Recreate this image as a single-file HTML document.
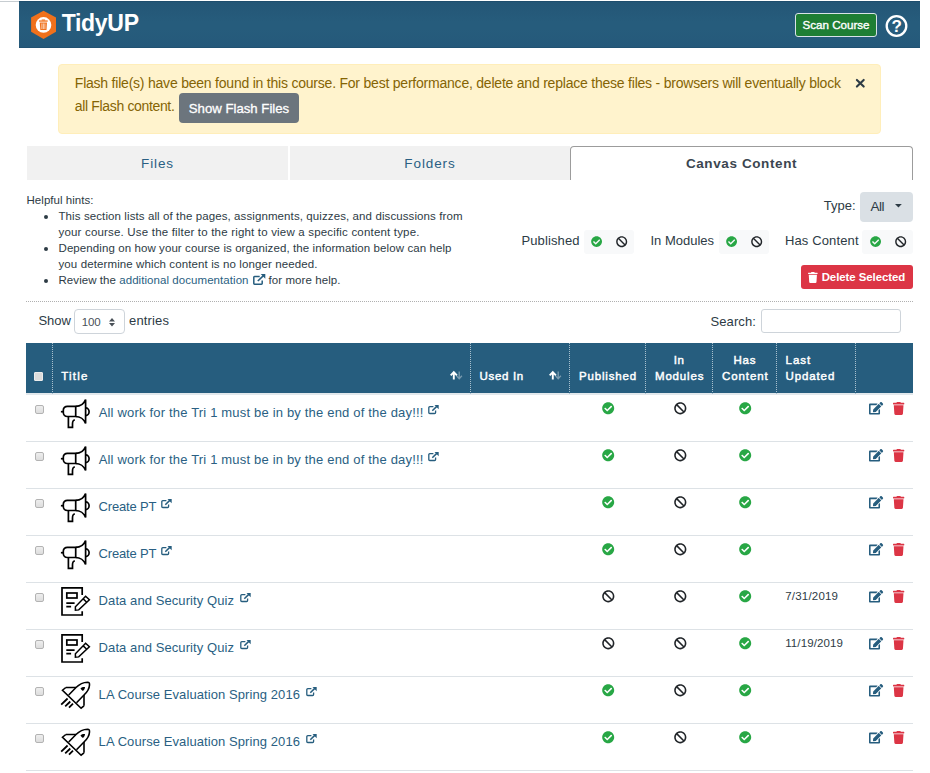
<!DOCTYPE html>
<html>
<head>
<meta charset="utf-8">
<title>TidyUP</title>
<style>
*{box-sizing:border-box;margin:0;padding:0}
html,body{width:930px;height:773px;overflow:hidden;background:#fff}
body{font-family:"Liberation Sans",sans-serif;color:#2d3b45;position:relative;font-size:14px}
.abs{position:absolute}
.t{position:absolute;white-space:nowrap;line-height:1}
#topline{left:0;top:1px;width:19px;height:1px;background:#c7cdd1}
#hdr{left:19px;top:1px;width:901px;height:47px;background:linear-gradient(#245676 0%,#265c7c 45%,#265c7c 60%,#25597a 100%);border-top:1px solid #1e4d6d;border-bottom:1px solid #215272}
#brand{left:61.7px;top:11.7px;font-size:23px;font-weight:bold;color:#fff;letter-spacing:-.3px}
#scan{left:795px;top:13px;width:82px;height:24px;background:#1e7e34;border:1px solid #d9e2e8;border-radius:3px;color:#fff;font-size:11.6px;-webkit-text-stroke:.35px #fff;text-align:center;line-height:21px;white-space:nowrap}
#alert{left:58px;top:64px;width:823px;height:70px;background:#fff3cd;border:1px solid #ffeeba;border-radius:4px}
.at{color:#856404;font-size:14px}
#flashbtn{left:179px;top:93px;width:120px;height:30px;background:#6c757d;border-radius:4px;color:#fff;font-size:13.2px;-webkit-text-stroke:.3px #fff;text-align:center;line-height:31px;white-space:nowrap}
.tab{top:146px;height:34px;background:#f1f1f1;color:#2a5f83;font-size:13.5px;text-align:center;line-height:36px;letter-spacing:.9px}
#tab3{left:570px;top:146px;width:343px;height:34px;background:#fff;border:1px solid #9c9c9c;border-bottom:none;border-radius:4px 4px 0 0;color:#3b4650;font-weight:bold;font-size:13.5px;text-align:center;line-height:34px;letter-spacing:.6px}
.hint{font-size:11.5px;color:#2d3b45}
.bul{left:44px;width:4px;height:4px;border-radius:50%;background:#2d3b45}
.lbl,.lnk{font-size:13px!important}
.lbl{font-size:13.5px;color:#2d3b45}
.tog{top:230px;height:24px;background:#f8f9fa;border-radius:3px}
#typebtn{left:860px;top:192px;width:53px;height:30px;background:#dae0e5;border-radius:4px;font-size:13.5px;color:#2d3b45;line-height:30px;padding-left:10px}
#delbtn{left:801px;top:265px;width:112px;height:24px;background:#dc3545;border-radius:3px;color:#fff;font-size:12px;font-weight:bold;line-height:24px;white-space:nowrap}
.dot{left:26px;width:887px;height:0;border-top:1px dotted #b0b0b0}
#sel{left:74px;top:309px;width:51px;height:25px;border:1px solid #ced4da;border-radius:4px;background:#fff}
#search{left:761px;top:309px;width:140px;height:24px;border:1px solid #ced4da;border-radius:3px;background:#fff}
#thead{left:26px;top:343px;width:887px;height:50px;background:#265d7e}
.th{color:#fff;font-size:11.5px;font-weight:normal;-webkit-text-stroke:.45px #fff;letter-spacing:.7px}
.vs{top:343px;width:0;height:51px;border-left:1px dotted #a9c0ce}
.row{left:26px;width:887px;height:1px;background:#dde2e6}
.cb{left:35px;width:9px;height:9px;border:1px solid #b3b3b3;border-radius:2px;background:linear-gradient(#eeeeee,#dddddd)}
.lnk{color:#2a5f83;font-size:13.5px}
.date{font-size:11.5px;color:#2d3b45}
svg{position:absolute;overflow:visible}
</style>
<style id="fit">
#al1{left:74.8px!important;letter-spacing:-0.218px!important}
#al2{left:74.8px!important;letter-spacing:-0.344px!important}
#h0{left:26.5px!important;letter-spacing:0.040px!important}
#h1{left:58.5px!important;letter-spacing:0.099px!important}
#h2{left:58.5px!important;letter-spacing:0.184px!important}
#h3{left:58.5px!important;letter-spacing:0.086px!important}
#h4{left:58.5px!important;letter-spacing:0.110px!important}
#h5{left:58.5px!important;letter-spacing:0.060px!important}
#h6{left:268.5px!important;letter-spacing:0.081px!important}
#typel{left:823.8px!important;letter-spacing:0.001px!important}
#publ{left:521.5px!important;letter-spacing:0.111px!important}
#inml{left:650.5px!important;letter-spacing:-0.010px!important}
#hasl{left:785.0px!important;letter-spacing:0.123px!important}
#showl{left:38.4px!important;letter-spacing:-0.044px!important}
#entl{left:129.0px!important;letter-spacing:0.161px!important}
#srchl{left:710.6px!important;letter-spacing:0.065px!important}
#thTitle{left:61.3px!important;letter-spacing:1.172px!important}
#thUsed{left:479.5px!important;letter-spacing:0.677px!important}
#thPub{left:578.9px!important;letter-spacing:0.848px!important}
#thIn{left:673.8px!important;letter-spacing:0.606px!important}
#thMod{left:655.0px!important;letter-spacing:0.822px!important}
#thHas{left:733.4px!important;letter-spacing:0.823px!important}
#thCon{left:722.0px!important;letter-spacing:0.903px!important}
#thLast{left:785.5px!important;letter-spacing:0.983px!important}
#thUpd{left:785.5px!important;letter-spacing:0.886px!important}
#r0{left:98.7px!important;letter-spacing:0.182px!important}
#r1{left:98.7px!important;letter-spacing:0.182px!important}
#r2{left:98.6px!important;letter-spacing:-0.169px!important}
#r3{left:98.6px!important;letter-spacing:-0.169px!important}
#r4{left:98.6px!important;letter-spacing:0.082px!important}
#r5{left:98.6px!important;letter-spacing:0.082px!important}
#r6{left:98.6px!important;letter-spacing:0.085px!important}
#r7{left:98.6px!important;letter-spacing:0.085px!important}
#delt{left:821.7px!important;letter-spacing:-0.051px!important}
#allt{left:870.4px!important;letter-spacing:-0.408px!important}
#sel100{left:81.7px!important;letter-spacing:-0.094px!important}
#d4{left:785.2px!important;letter-spacing:0.204px!important}
#d5{left:785.2px!important;letter-spacing:0.122px!important}
</style>
</head>
<body>
<div class="abs" id="topline"></div>
<div class="abs" id="hdr"></div>
<svg id="logo" style="left:31px;top:10px" width="26" height="30" viewBox="0 0 26 30">
<polygon points="12.500,0.800 25,7.600 25,21.800 12.500,29 0.100,21.800 0.100,7.600" fill="#f0711c"/>
<circle cx="12.500" cy="14.900" r="7.800" fill="#fff"/>
<g fill="#f0711c"><rect x="8.100" y="10.400" width="8.600" height="1.300"/><rect x="10.700" y="9.500" width="3.400" height="1.100"/><path d="M8.800 12.500h7.200l-0.500 7.500h-6.200z"/></g>
<g stroke="#fff" stroke-width=".75" stroke-opacity=".85"><line x1="10.900" y1="13.500" x2="10.900" y2="19"/><line x1="12.400" y1="13.500" x2="12.400" y2="19"/><line x1="13.900" y1="13.500" x2="13.900" y2="19"/></g>
</svg>
<div class="t" id="brand">TidyUP</div>
<div class="abs" id="scan">Scan Course</div>
<svg id="help" style="left:885px;top:15px" width="23" height="23" viewBox="0 0 23 23">
<circle cx="11.5" cy="11" r="9.8" fill="none" stroke="#fff" stroke-width="2.3"/>
<text x="11.6" y="17.2" font-family="Liberation Sans" font-weight="bold" font-size="17" fill="#fff" text-anchor="middle">?</text>
</svg>

<div class="abs" id="alert"></div>
<div class="t at" id="al1" style="left:74px;top:76.3px">Flash file(s) have been found in this course. For best performance, delete and replace these files - browsers will eventually block</div>
<div class="t at" id="al2" style="left:74px;top:98.7px">all Flash content.</div>
<div class="abs" id="flashbtn">Show Flash Files</div>
<svg style="left:855px;top:78px" width="11" height="11" viewBox="0 0 11 11"><path d="M1.900 1.900L8.700 8.600M8.700 1.900L1.900 8.600" stroke="#2d3b45" stroke-width="2.100" stroke-linecap="round" fill="none"/></svg>

<div class="abs tab" id="tab1" style="left:27px;width:261px">Files</div>
<div class="abs tab" id="tab2" style="left:290px;width:280px">Folders</div>
<div class="abs" id="tab3">Canvas Content</div>

<div class="t hint" id="h0" style="left:26px;top:195px">Helpful hints:</div>
<div class="t hint" id="h1" style="left:58px;top:211px">This section lists all of the pages, assignments, quizzes, and discussions from</div>
<div class="t hint" id="h2" style="left:58px;top:227px">your course. Use the filter to the right to view a specific content type.</div>
<div class="t hint" id="h3" style="left:58px;top:243px">Depending on how your course is organized, the information below can help</div>
<div class="t hint" id="h4" style="left:58px;top:259px">you determine which content is no longer needed.</div>
<div class="t hint" id="h5" style="left:58px;top:275px">Review the <span style="color:#2a5f83">additional documentation</span></div>
<div class="t hint" id="h6" style="left:269px;top:275px">for more help.</div>

<div class="abs bul" style="top:215px"></div>
<div class="abs bul" style="top:247px"></div>
<div class="abs bul" style="top:279px"></div>
<svg style="left:253px;top:274.300px" width="12.500" height="11" viewBox="0 0 12.500 11"><g fill="none" stroke="#265d7e"><path d="M6.700 2.500H1.500A0.700 0.700 0 0 0 0.800 3.200V9.500A0.700 0.700 0 0 0 1.500 10.200H8.500A0.700 0.700 0 0 0 9.200 9.500V6.400" stroke-width="1.500"/><path d="M4.800 7L10.500 1.600" stroke-width="1.600"/></g><path d="M7.700 0.100H12.300V4.700z" fill="#265d7e"/></svg>
<div class="t lbl" id="typel" style="left:823px;top:199px">Type:</div>
<div class="abs" id="typebtn"></div><div class="t" id="allt" style="left:870.4px;top:200.3px;font-size:13.5px;color:#2d3b45">All</div><svg style="left:895.3px;top:204.2px" width="6.8" height="3.6" viewBox="0 0 68 36"><path d="M0 0H68L34 36z" fill="#2d3b45"/></svg>
<div class="t lbl" id="publ" style="left:522px;top:234px">Published</div>
<div class="t lbl" id="inml" style="left:650px;top:234px">In Modules</div>
<div class="t lbl" id="hasl" style="left:785px;top:234px">Has Content</div>
<div class="abs tog" style="left:584px;width:50px"></div>
<div class="abs tog" style="left:719px;width:50px"></div>
<div class="abs tog" style="left:862px;width:51px"></div>
<svg style="left:591px;top:236.4px;fill:#28a745" width="11.2" height="11.2" viewBox="0 0 512 512"><path d="M504 256c0 136.967-111.033 248-248 248S8 392.967 8 256 119.033 8 256 8s248 111.033 248 248zM227.314 387.314l184-184c6.248-6.248 6.248-16.379 0-22.627l-22.627-22.627c-6.248-6.249-16.379-6.249-22.628 0L216 308.118l-70.059-70.059c-6.248-6.248-16.379-6.248-22.628 0l-22.627 22.627c-6.248 6.248-6.248 16.379 0 22.627l104 104c6.249 6.249 16.379 6.249 22.628.001z"/></svg><svg style="left:615.6px;top:236.3px;fill:#212529" width="11.4" height="11.4" viewBox="0 0 512 512"><path d="M256 8C119.034 8 8 119.033 8 256s111.034 248 248 248 248-111.034 248-248S392.967 8 256 8zm130.108 117.892c65.448 65.448 70 165.481 20.677 235.637L150.47 105.216c70.204-49.356 170.226-44.735 235.638 20.676zM125.892 386.108c-65.448-65.448-70-165.481-20.677-235.637L361.53 406.784c-70.203 49.356-170.226 44.736-235.638-20.676z"/></svg>
<svg style="left:726px;top:236.4px;fill:#28a745" width="11.2" height="11.2" viewBox="0 0 512 512"><path d="M504 256c0 136.967-111.033 248-248 248S8 392.967 8 256 119.033 8 256 8s248 111.033 248 248zM227.314 387.314l184-184c6.248-6.248 6.248-16.379 0-22.627l-22.627-22.627c-6.248-6.249-16.379-6.249-22.628 0L216 308.118l-70.059-70.059c-6.248-6.248-16.379-6.248-22.628 0l-22.627 22.627c-6.248 6.248-6.248 16.379 0 22.627l104 104c6.249 6.249 16.379 6.249 22.628.001z"/></svg><svg style="left:750.6px;top:236.3px;fill:#212529" width="11.4" height="11.4" viewBox="0 0 512 512"><path d="M256 8C119.034 8 8 119.033 8 256s111.034 248 248 248 248-111.034 248-248S392.967 8 256 8zm130.108 117.892c65.448 65.448 70 165.481 20.677 235.637L150.47 105.216c70.204-49.356 170.226-44.735 235.638 20.676zM125.892 386.108c-65.448-65.448-70-165.481-20.677-235.637L361.53 406.784c-70.203 49.356-170.226 44.736-235.638-20.676z"/></svg>
<svg style="left:870px;top:236.4px;fill:#28a745" width="11.2" height="11.2" viewBox="0 0 512 512"><path d="M504 256c0 136.967-111.033 248-248 248S8 392.967 8 256 119.033 8 256 8s248 111.033 248 248zM227.314 387.314l184-184c6.248-6.248 6.248-16.379 0-22.627l-22.627-22.627c-6.248-6.249-16.379-6.249-22.628 0L216 308.118l-70.059-70.059c-6.248-6.248-16.379-6.248-22.628 0l-22.627 22.627c-6.248 6.248-6.248 16.379 0 22.627l104 104c6.249 6.249 16.379 6.249 22.628.001z"/></svg><svg style="left:894.6px;top:236.3px;fill:#212529" width="11.4" height="11.4" viewBox="0 0 512 512"><path d="M256 8C119.034 8 8 119.033 8 256s111.034 248 248 248 248-111.034 248-248S392.967 8 256 8zm130.108 117.892c65.448 65.448 70 165.481 20.677 235.637L150.47 105.216c70.204-49.356 170.226-44.735 235.638 20.676zM125.892 386.108c-65.448-65.448-70-165.481-20.677-235.637L361.53 406.784c-70.203 49.356-170.226 44.736-235.638-20.676z"/></svg>
<div class="abs" id="delbtn"></div><svg style="left:808.1px;top:271.5px;fill:#fff" width="9.7" height="10.9" viewBox="0 0 448 512"><path d="M432 32H312l-9.400-18.700A24 24 0 0 0 281.100 0H166.800a23.720 23.720 0 0 0-21.400 13.300L136 32H16A16 16 0 0 0 0 48v32a16 16 0 0 0 16 16h416a16 16 0 0 0 16-16V48a16 16 0 0 0-16-16zM53.200 467a48 48 0 0 0 47.900 45h245.800a48 48 0 0 0 47.900-45L416 128H32z"/></svg><div class="t" id="delt" style="left:821.7px;top:271.5px;font-size:11.4px;font-weight:bold;color:#fff">Delete Selected</div>

<div class="abs dot" style="top:301px"></div>
<div class="t lbl" id="showl" style="left:38px;top:314px">Show</div>
<div class="abs" id="sel"></div>
<div class="t" id="sel100" style="left:82px;top:316.5px;font-size:11.5px;color:#495057">100</div>
<svg style="left:108.6px;top:317.5px" width="6" height="8.4" viewBox="0 0 60 84"><path d="M0 34L30 0L60 34zM0 50L30 84L60 50z" fill="#495057"/></svg>
<div class="t lbl" id="entl" style="left:129px;top:314px">entries</div>
<div class="t lbl" id="srchl" style="left:711px;top:315px">Search:</div>
<div class="abs" id="search"></div>

<div class="abs" id="thead"></div><div class="abs" style="left:26px;top:393px;width:887px;height:2px;background:#e2e8ec"></div>
<!--TABLE-->
<div class="abs cb" style="top:372px;left:34px;background:#dcdcdc;border-color:#ececec;border-radius:1px"></div>
<div class="abs vs" style="left:52px"></div>
<div class="abs vs" style="left:470px"></div>
<div class="abs vs" style="left:569px"></div>
<div class="abs vs" style="left:645px"></div>
<div class="abs vs" style="left:712px"></div>
<div class="abs vs" style="left:776px"></div>
<div class="abs vs" style="left:855px"></div>
<div class="t th" id="thTitle" style="left:61px;top:371px">Title</div>
<div class="t th" id="thUsed" style="left:479px;top:371px">Used In</div>
<div class="t th" id="thPub" style="left:579px;top:371px">Published</div>
<div class="t th" id="thIn" style="left:673px;top:355px">In</div>
<div class="t th" id="thMod" style="left:655px;top:371px">Modules</div>
<div class="t th" id="thHas" style="left:733px;top:355px">Has</div>
<div class="t th" id="thCon" style="left:722px;top:371px">Content</div>
<div class="t th" id="thLast" style="left:786px;top:355px">Last</div>
<div class="t th" id="thUpd" style="left:786px;top:371px">Updated</div>
<svg style="left:450px;top:370.5px" width="13" height="9" viewBox="0 0 13 9"><g fill="none" stroke="#fff" stroke-width="1.9"><path d="M3.800 1.500V8.400M0.700 4.400L3.800 1.200L6.900 4.400"/></g><g fill="none" stroke="#fff" stroke-opacity=".38" stroke-width="1.300"><path d="M9.200 0.400V7.600M6.500 4.800L9.200 7.800L11.900 4.800"/></g></svg>
<svg style="left:549.4px;top:370.5px" width="13" height="9" viewBox="0 0 13 9"><g fill="none" stroke="#fff" stroke-width="1.9"><path d="M3.800 1.500V8.400M0.700 4.400L3.800 1.200L6.900 4.400"/></g><g fill="none" stroke="#fff" stroke-opacity=".38" stroke-width="1.300"><path d="M9.200 0.400V7.600M6.500 4.800L9.200 7.800L11.900 4.800"/></g></svg>
<div class="abs cb" style="top:405px"></div>
<svg style="left:60px;top:398px" width="31" height="31" viewBox="0 0 31 31"><g fill="none" stroke="#000" stroke-width="1.7" stroke-linejoin="miter"><path d="M0.900 13.700H3.300"/><path d="M15.700 8.300H7.300a4 4 0 0 0-4 4v2.200a4 4 0 0 0 4 4H15.700z"/><path d="M15.700 8.300C20 8.300 24 5.500 25.600 1.600V25.500C24 21.500 20 18.500 15.700 18.500"/><path d="M25.600 9.900a3.500 3.900 0 0 1 0 7.800"/><path d="M8.400 18.500V29.300H12.500V26C12.500 23.500 13.500 22 14.900 22"/></g></svg>
<div class="t lnk" id="r0" style="left:98px;top:406px">All work for the Tri 1 must be in by the end of the day!!!</div>
<svg style="left:428.2px;top:404.8px;fill:#265d7e;stroke:#265d7e" width="11" height="9.2" viewBox="0 0 11 9.2"><path d="M5.400 1.700H1.800A1 1 0 0 0 0.800 2.700V7.500A1 1 0 0 0 1.800 8.500H6.600A1 1 0 0 0 7.600 7.500V5.400" fill="none" stroke-width="1.300"/><path d="M4.300 5.700L8.800 1.400" fill="none" stroke-width="1.500"/><path d="M6.500 0.100H10.700V4.300z" stroke="none"/></svg>
<svg style="left:602px;top:402px;fill:#28a745" width="12.4" height="12.4" viewBox="0 0 512 512"><path d="M504 256c0 136.967-111.033 248-248 248S8 392.967 8 256 119.033 8 256 8s248 111.033 248 248zM227.314 387.314l184-184c6.248-6.248 6.248-16.379 0-22.627l-22.627-22.627c-6.248-6.249-16.379-6.249-22.628 0L216 308.118l-70.059-70.059c-6.248-6.248-16.379-6.248-22.628 0l-22.627 22.627c-6.248 6.248-6.248 16.379 0 22.627l104 104c6.249 6.249 16.379 6.249 22.628.001z"/></svg>
<svg style="left:673.7px;top:402px;fill:#212529" width="12.6" height="12.6" viewBox="0 0 512 512"><path d="M256 8C119.034 8 8 119.033 8 256s111.034 248 248 248 248-111.034 248-248S392.967 8 256 8zm130.108 117.892c65.448 65.448 70 165.481 20.677 235.637L150.47 105.216c70.204-49.356 170.226-44.735 235.638 20.676zM125.892 386.108c-65.448-65.448-70-165.481-20.677-235.637L361.53 406.784c-70.203 49.356-170.226 44.736-235.638-20.676z"/></svg>
<svg style="left:739px;top:402px;fill:#28a745" width="12.4" height="12.4" viewBox="0 0 512 512"><path d="M504 256c0 136.967-111.033 248-248 248S8 392.967 8 256 119.033 8 256 8s248 111.033 248 248zM227.314 387.314l184-184c6.248-6.248 6.248-16.379 0-22.627l-22.627-22.627c-6.248-6.249-16.379-6.249-22.628 0L216 308.118l-70.059-70.059c-6.248-6.248-16.379-6.248-22.628 0l-22.627 22.627c-6.248 6.248-6.248 16.379 0 22.627l104 104c6.249 6.249 16.379 6.249 22.628.001z"/></svg>
<svg style="left:869px;top:401.5px;fill:#265d7e" width="14.2" height="12.6" viewBox="0 0 576 512"><path d="M402.600 83.200l90.200 90.200c3.800 3.800 3.800 10 0 13.800L274.400 405.600l-92.800 10.300c-12.400 1.400-22.900-9.100-21.500-21.500l10.300-92.800L388.800 83.200c3.800-3.800 10-3.800 13.800 0zm162-22.900l-48.800-48.800c-15.200-15.200-39.900-15.200-55.200 0l-35.400 35.400c-3.800 3.800-3.800 10 0 13.800l90.200 90.200c3.800 3.800 10 3.800 13.800 0l35.400-35.400c15.200-15.300 15.200-40 0-55.200zM384 346.200V448H64V128h229.800c3.200 0 6.200-1.300 8.500-3.500l40-40c7.600-7.600 2.200-20.500-8.500-20.500H48C21.500 64 0 85.500 0 112v352c0 26.500 21.500 48 48 48h352c26.500 0 48-21.500 48-48V306.200c0-10.700-12.900-16-20.500-8.500l-40 40c-2.200 2.300-3.500 5.300-3.500 8.500z"/></svg>
<svg style="left:893px;top:401.5px;fill:#dc3545" width="11.3" height="12.9" viewBox="0 0 448 512"><path d="M432 32H312l-9.400-18.700A24 24 0 0 0 281.100 0H166.800a23.720 23.720 0 0 0-21.400 13.300L136 32H16A16 16 0 0 0 0 48v32a16 16 0 0 0 16 16h416a16 16 0 0 0 16-16V48a16 16 0 0 0-16-16zM53.200 467a48 48 0 0 0 47.900 45h245.800a48 48 0 0 0 47.900-45L416 128H32z"/></svg>
<div class="abs row" style="top:441px"></div>
<div class="abs cb" style="top:452px"></div>
<svg style="left:60px;top:445px" width="31" height="31" viewBox="0 0 31 31"><g fill="none" stroke="#000" stroke-width="1.7" stroke-linejoin="miter"><path d="M0.900 13.700H3.300"/><path d="M15.700 8.300H7.300a4 4 0 0 0-4 4v2.200a4 4 0 0 0 4 4H15.700z"/><path d="M15.700 8.300C20 8.300 24 5.500 25.600 1.600V25.500C24 21.500 20 18.500 15.700 18.500"/><path d="M25.600 9.900a3.500 3.900 0 0 1 0 7.800"/><path d="M8.400 18.500V29.300H12.500V26C12.500 23.500 13.500 22 14.900 22"/></g></svg>
<div class="t lnk" id="r1" style="left:98px;top:453px">All work for the Tri 1 must be in by the end of the day!!!</div>
<svg style="left:428.2px;top:451.8px;fill:#265d7e;stroke:#265d7e" width="11" height="9.2" viewBox="0 0 11 9.2"><path d="M5.400 1.700H1.800A1 1 0 0 0 0.800 2.700V7.500A1 1 0 0 0 1.800 8.500H6.600A1 1 0 0 0 7.600 7.500V5.400" fill="none" stroke-width="1.300"/><path d="M4.300 5.700L8.800 1.400" fill="none" stroke-width="1.500"/><path d="M6.500 0.100H10.700V4.300z" stroke="none"/></svg>
<svg style="left:602px;top:449px;fill:#28a745" width="12.4" height="12.4" viewBox="0 0 512 512"><path d="M504 256c0 136.967-111.033 248-248 248S8 392.967 8 256 119.033 8 256 8s248 111.033 248 248zM227.314 387.314l184-184c6.248-6.248 6.248-16.379 0-22.627l-22.627-22.627c-6.248-6.249-16.379-6.249-22.628 0L216 308.118l-70.059-70.059c-6.248-6.248-16.379-6.248-22.628 0l-22.627 22.627c-6.248 6.248-6.248 16.379 0 22.627l104 104c6.249 6.249 16.379 6.249 22.628.001z"/></svg>
<svg style="left:673.7px;top:449px;fill:#212529" width="12.6" height="12.6" viewBox="0 0 512 512"><path d="M256 8C119.034 8 8 119.033 8 256s111.034 248 248 248 248-111.034 248-248S392.967 8 256 8zm130.108 117.892c65.448 65.448 70 165.481 20.677 235.637L150.47 105.216c70.204-49.356 170.226-44.735 235.638 20.676zM125.892 386.108c-65.448-65.448-70-165.481-20.677-235.637L361.53 406.784c-70.203 49.356-170.226 44.736-235.638-20.676z"/></svg>
<svg style="left:739px;top:449px;fill:#28a745" width="12.4" height="12.4" viewBox="0 0 512 512"><path d="M504 256c0 136.967-111.033 248-248 248S8 392.967 8 256 119.033 8 256 8s248 111.033 248 248zM227.314 387.314l184-184c6.248-6.248 6.248-16.379 0-22.627l-22.627-22.627c-6.248-6.249-16.379-6.249-22.628 0L216 308.118l-70.059-70.059c-6.248-6.248-16.379-6.248-22.628 0l-22.627 22.627c-6.248 6.248-6.248 16.379 0 22.627l104 104c6.249 6.249 16.379 6.249 22.628.001z"/></svg>
<svg style="left:869px;top:448.5px;fill:#265d7e" width="14.2" height="12.6" viewBox="0 0 576 512"><path d="M402.600 83.200l90.200 90.200c3.800 3.800 3.800 10 0 13.800L274.400 405.600l-92.800 10.300c-12.400 1.400-22.900-9.100-21.500-21.500l10.300-92.800L388.800 83.200c3.800-3.800 10-3.800 13.800 0zm162-22.900l-48.800-48.800c-15.200-15.200-39.900-15.200-55.200 0l-35.400 35.400c-3.800 3.800-3.800 10 0 13.800l90.200 90.200c3.800 3.800 10 3.800 13.800 0l35.400-35.400c15.200-15.300 15.200-40 0-55.200zM384 346.200V448H64V128h229.800c3.200 0 6.200-1.300 8.500-3.500l40-40c7.600-7.600 2.200-20.500-8.500-20.500H48C21.500 64 0 85.500 0 112v352c0 26.500 21.500 48 48 48h352c26.500 0 48-21.500 48-48V306.200c0-10.700-12.900-16-20.500-8.500l-40 40c-2.200 2.300-3.500 5.300-3.500 8.500z"/></svg>
<svg style="left:893px;top:448.5px;fill:#dc3545" width="11.3" height="12.9" viewBox="0 0 448 512"><path d="M432 32H312l-9.400-18.700A24 24 0 0 0 281.100 0H166.800a23.720 23.720 0 0 0-21.400 13.300L136 32H16A16 16 0 0 0 0 48v32a16 16 0 0 0 16 16h416a16 16 0 0 0 16-16V48a16 16 0 0 0-16-16zM53.200 467a48 48 0 0 0 47.900 45h245.800a48 48 0 0 0 47.900-45L416 128H32z"/></svg>
<div class="abs row" style="top:488px"></div>
<div class="abs cb" style="top:499px"></div>
<svg style="left:60px;top:492px" width="31" height="31" viewBox="0 0 31 31"><g fill="none" stroke="#000" stroke-width="1.7" stroke-linejoin="miter"><path d="M0.900 13.700H3.300"/><path d="M15.700 8.300H7.300a4 4 0 0 0-4 4v2.200a4 4 0 0 0 4 4H15.700z"/><path d="M15.700 8.300C20 8.300 24 5.500 25.600 1.600V25.500C24 21.500 20 18.500 15.700 18.500"/><path d="M25.600 9.900a3.500 3.900 0 0 1 0 7.800"/><path d="M8.400 18.500V29.300H12.500V26C12.500 23.500 13.500 22 14.900 22"/></g></svg>
<div class="t lnk" id="r2" style="left:98px;top:500px">Create PT</div>
<svg style="left:161.3px;top:498.8px;fill:#265d7e;stroke:#265d7e" width="11" height="9.2" viewBox="0 0 11 9.2"><path d="M5.400 1.700H1.800A1 1 0 0 0 0.800 2.700V7.500A1 1 0 0 0 1.800 8.500H6.600A1 1 0 0 0 7.600 7.500V5.400" fill="none" stroke-width="1.300"/><path d="M4.300 5.700L8.800 1.400" fill="none" stroke-width="1.500"/><path d="M6.500 0.100H10.700V4.300z" stroke="none"/></svg>
<svg style="left:602px;top:496px;fill:#28a745" width="12.4" height="12.4" viewBox="0 0 512 512"><path d="M504 256c0 136.967-111.033 248-248 248S8 392.967 8 256 119.033 8 256 8s248 111.033 248 248zM227.314 387.314l184-184c6.248-6.248 6.248-16.379 0-22.627l-22.627-22.627c-6.248-6.249-16.379-6.249-22.628 0L216 308.118l-70.059-70.059c-6.248-6.248-16.379-6.248-22.628 0l-22.627 22.627c-6.248 6.248-6.248 16.379 0 22.627l104 104c6.249 6.249 16.379 6.249 22.628.001z"/></svg>
<svg style="left:673.7px;top:496px;fill:#212529" width="12.6" height="12.6" viewBox="0 0 512 512"><path d="M256 8C119.034 8 8 119.033 8 256s111.034 248 248 248 248-111.034 248-248S392.967 8 256 8zm130.108 117.892c65.448 65.448 70 165.481 20.677 235.637L150.47 105.216c70.204-49.356 170.226-44.735 235.638 20.676zM125.892 386.108c-65.448-65.448-70-165.481-20.677-235.637L361.53 406.784c-70.203 49.356-170.226 44.736-235.638-20.676z"/></svg>
<svg style="left:739px;top:496px;fill:#28a745" width="12.4" height="12.4" viewBox="0 0 512 512"><path d="M504 256c0 136.967-111.033 248-248 248S8 392.967 8 256 119.033 8 256 8s248 111.033 248 248zM227.314 387.314l184-184c6.248-6.248 6.248-16.379 0-22.627l-22.627-22.627c-6.248-6.249-16.379-6.249-22.628 0L216 308.118l-70.059-70.059c-6.248-6.248-16.379-6.248-22.628 0l-22.627 22.627c-6.248 6.248-6.248 16.379 0 22.627l104 104c6.249 6.249 16.379 6.249 22.628.001z"/></svg>
<svg style="left:869px;top:495.5px;fill:#265d7e" width="14.2" height="12.6" viewBox="0 0 576 512"><path d="M402.600 83.200l90.200 90.200c3.800 3.800 3.800 10 0 13.800L274.400 405.600l-92.800 10.300c-12.400 1.400-22.900-9.100-21.500-21.500l10.300-92.800L388.800 83.200c3.800-3.800 10-3.800 13.800 0zm162-22.900l-48.800-48.800c-15.200-15.200-39.900-15.200-55.200 0l-35.400 35.400c-3.800 3.800-3.800 10 0 13.800l90.200 90.200c3.800 3.800 10 3.800 13.800 0l35.400-35.400c15.200-15.300 15.200-40 0-55.200zM384 346.200V448H64V128h229.800c3.200 0 6.200-1.300 8.500-3.500l40-40c7.600-7.600 2.200-20.500-8.500-20.500H48C21.500 64 0 85.500 0 112v352c0 26.500 21.500 48 48 48h352c26.500 0 48-21.500 48-48V306.200c0-10.700-12.900-16-20.500-8.500l-40 40c-2.200 2.300-3.500 5.300-3.500 8.500z"/></svg>
<svg style="left:893px;top:495.5px;fill:#dc3545" width="11.3" height="12.9" viewBox="0 0 448 512"><path d="M432 32H312l-9.400-18.700A24 24 0 0 0 281.100 0H166.800a23.720 23.720 0 0 0-21.400 13.300L136 32H16A16 16 0 0 0 0 48v32a16 16 0 0 0 16 16h416a16 16 0 0 0 16-16V48a16 16 0 0 0-16-16zM53.200 467a48 48 0 0 0 47.900 45h245.800a48 48 0 0 0 47.900-45L416 128H32z"/></svg>
<div class="abs row" style="top:535px"></div>
<div class="abs cb" style="top:546px"></div>
<svg style="left:60px;top:539px" width="31" height="31" viewBox="0 0 31 31"><g fill="none" stroke="#000" stroke-width="1.7" stroke-linejoin="miter"><path d="M0.900 13.700H3.300"/><path d="M15.700 8.300H7.300a4 4 0 0 0-4 4v2.200a4 4 0 0 0 4 4H15.700z"/><path d="M15.700 8.300C20 8.300 24 5.500 25.600 1.600V25.500C24 21.500 20 18.500 15.700 18.500"/><path d="M25.600 9.900a3.500 3.900 0 0 1 0 7.800"/><path d="M8.400 18.500V29.300H12.500V26C12.500 23.500 13.500 22 14.900 22"/></g></svg>
<div class="t lnk" id="r3" style="left:98px;top:547px">Create PT</div>
<svg style="left:161.3px;top:545.8px;fill:#265d7e;stroke:#265d7e" width="11" height="9.2" viewBox="0 0 11 9.2"><path d="M5.400 1.700H1.800A1 1 0 0 0 0.800 2.700V7.500A1 1 0 0 0 1.800 8.500H6.600A1 1 0 0 0 7.600 7.500V5.400" fill="none" stroke-width="1.300"/><path d="M4.300 5.700L8.800 1.400" fill="none" stroke-width="1.500"/><path d="M6.500 0.100H10.700V4.300z" stroke="none"/></svg>
<svg style="left:602px;top:543px;fill:#28a745" width="12.4" height="12.4" viewBox="0 0 512 512"><path d="M504 256c0 136.967-111.033 248-248 248S8 392.967 8 256 119.033 8 256 8s248 111.033 248 248zM227.314 387.314l184-184c6.248-6.248 6.248-16.379 0-22.627l-22.627-22.627c-6.248-6.249-16.379-6.249-22.628 0L216 308.118l-70.059-70.059c-6.248-6.248-16.379-6.248-22.628 0l-22.627 22.627c-6.248 6.248-6.248 16.379 0 22.627l104 104c6.249 6.249 16.379 6.249 22.628.001z"/></svg>
<svg style="left:673.7px;top:543px;fill:#212529" width="12.6" height="12.6" viewBox="0 0 512 512"><path d="M256 8C119.034 8 8 119.033 8 256s111.034 248 248 248 248-111.034 248-248S392.967 8 256 8zm130.108 117.892c65.448 65.448 70 165.481 20.677 235.637L150.47 105.216c70.204-49.356 170.226-44.735 235.638 20.676zM125.892 386.108c-65.448-65.448-70-165.481-20.677-235.637L361.53 406.784c-70.203 49.356-170.226 44.736-235.638-20.676z"/></svg>
<svg style="left:739px;top:543px;fill:#28a745" width="12.4" height="12.4" viewBox="0 0 512 512"><path d="M504 256c0 136.967-111.033 248-248 248S8 392.967 8 256 119.033 8 256 8s248 111.033 248 248zM227.314 387.314l184-184c6.248-6.248 6.248-16.379 0-22.627l-22.627-22.627c-6.248-6.249-16.379-6.249-22.628 0L216 308.118l-70.059-70.059c-6.248-6.248-16.379-6.248-22.628 0l-22.627 22.627c-6.248 6.248-6.248 16.379 0 22.627l104 104c6.249 6.249 16.379 6.249 22.628.001z"/></svg>
<svg style="left:869px;top:542.5px;fill:#265d7e" width="14.2" height="12.6" viewBox="0 0 576 512"><path d="M402.600 83.200l90.200 90.200c3.800 3.800 3.800 10 0 13.800L274.400 405.600l-92.800 10.300c-12.400 1.400-22.900-9.100-21.500-21.500l10.300-92.800L388.800 83.200c3.800-3.800 10-3.800 13.800 0zm162-22.900l-48.800-48.800c-15.200-15.200-39.900-15.200-55.200 0l-35.400 35.400c-3.800 3.800-3.800 10 0 13.800l90.200 90.200c3.800 3.800 10 3.800 13.800 0l35.400-35.400c15.200-15.300 15.200-40 0-55.200zM384 346.200V448H64V128h229.800c3.200 0 6.200-1.300 8.500-3.500l40-40c7.600-7.600 2.200-20.500-8.500-20.500H48C21.500 64 0 85.500 0 112v352c0 26.500 21.500 48 48 48h352c26.500 0 48-21.500 48-48V306.200c0-10.700-12.900-16-20.500-8.500l-40 40c-2.200 2.300-3.500 5.300-3.500 8.500z"/></svg>
<svg style="left:893px;top:542.5px;fill:#dc3545" width="11.3" height="12.9" viewBox="0 0 448 512"><path d="M432 32H312l-9.400-18.700A24 24 0 0 0 281.100 0H166.800a23.720 23.720 0 0 0-21.400 13.300L136 32H16A16 16 0 0 0 0 48v32a16 16 0 0 0 16 16h416a16 16 0 0 0 16-16V48a16 16 0 0 0-16-16zM53.200 467a48 48 0 0 0 47.900 45h245.800a48 48 0 0 0 47.900-45L416 128H32z"/></svg>
<div class="abs row" style="top:582px"></div>
<div class="abs cb" style="top:593px"></div>
<svg style="left:60px;top:586px" width="31" height="31" viewBox="0 0 31 31"><g fill="none" stroke="#000" stroke-width="1.7"><path d="M22.200 9.100V1.800H2V29H22.200V25.200"/><rect x="6.800" y="7" width="10.200" height="5"/><path d="M6.300 17.200H14.600M6.300 20.700H11.100"/><path d="M25.600 10.200L29.400 13.700L18.700 23.900L15.400 24.200L15.400 20.700ZM23.200 12.900L26.200 15.800" stroke-width="1.5"/></g></svg>
<div class="t lnk" id="r4" style="left:98px;top:594px">Data and Security Quiz</div>
<svg style="left:239.5px;top:592.8px;fill:#265d7e;stroke:#265d7e" width="11" height="9.2" viewBox="0 0 11 9.2"><path d="M5.400 1.700H1.800A1 1 0 0 0 0.800 2.700V7.500A1 1 0 0 0 1.800 8.500H6.600A1 1 0 0 0 7.600 7.500V5.400" fill="none" stroke-width="1.300"/><path d="M4.300 5.700L8.800 1.400" fill="none" stroke-width="1.500"/><path d="M6.500 0.100H10.700V4.300z" stroke="none"/></svg>
<svg style="left:601.5px;top:590px;fill:#212529" width="12.6" height="12.6" viewBox="0 0 512 512"><path d="M256 8C119.034 8 8 119.033 8 256s111.034 248 248 248 248-111.034 248-248S392.967 8 256 8zm130.108 117.892c65.448 65.448 70 165.481 20.677 235.637L150.47 105.216c70.204-49.356 170.226-44.735 235.638 20.676zM125.892 386.108c-65.448-65.448-70-165.481-20.677-235.637L361.53 406.784c-70.203 49.356-170.226 44.736-235.638-20.676z"/></svg>
<svg style="left:673.7px;top:590px;fill:#212529" width="12.6" height="12.6" viewBox="0 0 512 512"><path d="M256 8C119.034 8 8 119.033 8 256s111.034 248 248 248 248-111.034 248-248S392.967 8 256 8zm130.108 117.892c65.448 65.448 70 165.481 20.677 235.637L150.47 105.216c70.204-49.356 170.226-44.735 235.638 20.676zM125.892 386.108c-65.448-65.448-70-165.481-20.677-235.637L361.53 406.784c-70.203 49.356-170.226 44.736-235.638-20.676z"/></svg>
<svg style="left:739px;top:590px;fill:#28a745" width="12.4" height="12.4" viewBox="0 0 512 512"><path d="M504 256c0 136.967-111.033 248-248 248S8 392.967 8 256 119.033 8 256 8s248 111.033 248 248zM227.314 387.314l184-184c6.248-6.248 6.248-16.379 0-22.627l-22.627-22.627c-6.248-6.249-16.379-6.249-22.628 0L216 308.118l-70.059-70.059c-6.248-6.248-16.379-6.248-22.628 0l-22.627 22.627c-6.248 6.248-6.248 16.379 0 22.627l104 104c6.249 6.249 16.379 6.249 22.628.001z"/></svg>
<div class="t date" id="d4" style="left:786px;top:591px">7/31/2019</div>
<svg style="left:869px;top:589.5px;fill:#265d7e" width="14.2" height="12.6" viewBox="0 0 576 512"><path d="M402.600 83.200l90.200 90.200c3.800 3.800 3.800 10 0 13.800L274.400 405.600l-92.800 10.300c-12.400 1.400-22.900-9.100-21.500-21.500l10.300-92.800L388.800 83.200c3.800-3.800 10-3.800 13.800 0zm162-22.900l-48.800-48.800c-15.200-15.200-39.900-15.200-55.200 0l-35.400 35.400c-3.800 3.800-3.800 10 0 13.800l90.200 90.200c3.800 3.800 10 3.800 13.800 0l35.400-35.400c15.200-15.300 15.200-40 0-55.200zM384 346.200V448H64V128h229.800c3.200 0 6.200-1.300 8.500-3.500l40-40c7.600-7.600 2.200-20.500-8.500-20.500H48C21.500 64 0 85.500 0 112v352c0 26.500 21.500 48 48 48h352c26.500 0 48-21.500 48-48V306.200c0-10.700-12.900-16-20.500-8.500l-40 40c-2.200 2.300-3.500 5.300-3.500 8.500z"/></svg>
<svg style="left:893px;top:589.5px;fill:#dc3545" width="11.3" height="12.9" viewBox="0 0 448 512"><path d="M432 32H312l-9.400-18.700A24 24 0 0 0 281.100 0H166.800a23.720 23.720 0 0 0-21.400 13.300L136 32H16A16 16 0 0 0 0 48v32a16 16 0 0 0 16 16h416a16 16 0 0 0 16-16V48a16 16 0 0 0-16-16zM53.200 467a48 48 0 0 0 47.900 45h245.800a48 48 0 0 0 47.900-45L416 128H32z"/></svg>
<div class="abs row" style="top:629px"></div>
<div class="abs cb" style="top:640px"></div>
<svg style="left:60px;top:633px" width="31" height="31" viewBox="0 0 31 31"><g fill="none" stroke="#000" stroke-width="1.7"><path d="M22.200 9.100V1.800H2V29H22.200V25.200"/><rect x="6.800" y="7" width="10.200" height="5"/><path d="M6.300 17.200H14.600M6.300 20.700H11.100"/><path d="M25.600 10.200L29.400 13.700L18.700 23.900L15.400 24.200L15.400 20.700ZM23.200 12.900L26.200 15.800" stroke-width="1.5"/></g></svg>
<div class="t lnk" id="r5" style="left:98px;top:641px">Data and Security Quiz</div>
<svg style="left:239.5px;top:639.8px;fill:#265d7e;stroke:#265d7e" width="11" height="9.2" viewBox="0 0 11 9.2"><path d="M5.400 1.700H1.800A1 1 0 0 0 0.800 2.700V7.500A1 1 0 0 0 1.800 8.500H6.600A1 1 0 0 0 7.600 7.500V5.400" fill="none" stroke-width="1.300"/><path d="M4.300 5.700L8.800 1.400" fill="none" stroke-width="1.500"/><path d="M6.500 0.100H10.700V4.300z" stroke="none"/></svg>
<svg style="left:601.5px;top:637px;fill:#212529" width="12.6" height="12.6" viewBox="0 0 512 512"><path d="M256 8C119.034 8 8 119.033 8 256s111.034 248 248 248 248-111.034 248-248S392.967 8 256 8zm130.108 117.892c65.448 65.448 70 165.481 20.677 235.637L150.47 105.216c70.204-49.356 170.226-44.735 235.638 20.676zM125.892 386.108c-65.448-65.448-70-165.481-20.677-235.637L361.53 406.784c-70.203 49.356-170.226 44.736-235.638-20.676z"/></svg>
<svg style="left:673.7px;top:637px;fill:#212529" width="12.6" height="12.6" viewBox="0 0 512 512"><path d="M256 8C119.034 8 8 119.033 8 256s111.034 248 248 248 248-111.034 248-248S392.967 8 256 8zm130.108 117.892c65.448 65.448 70 165.481 20.677 235.637L150.47 105.216c70.204-49.356 170.226-44.735 235.638 20.676zM125.892 386.108c-65.448-65.448-70-165.481-20.677-235.637L361.53 406.784c-70.203 49.356-170.226 44.736-235.638-20.676z"/></svg>
<svg style="left:739px;top:637px;fill:#28a745" width="12.4" height="12.4" viewBox="0 0 512 512"><path d="M504 256c0 136.967-111.033 248-248 248S8 392.967 8 256 119.033 8 256 8s248 111.033 248 248zM227.314 387.314l184-184c6.248-6.248 6.248-16.379 0-22.627l-22.627-22.627c-6.248-6.249-16.379-6.249-22.628 0L216 308.118l-70.059-70.059c-6.248-6.248-16.379-6.248-22.628 0l-22.627 22.627c-6.248 6.248-6.248 16.379 0 22.627l104 104c6.249 6.249 16.379 6.249 22.628.001z"/></svg>
<div class="t date" id="d5" style="left:786px;top:638px">11/19/2019</div>
<svg style="left:869px;top:636.5px;fill:#265d7e" width="14.2" height="12.6" viewBox="0 0 576 512"><path d="M402.600 83.200l90.200 90.200c3.800 3.800 3.800 10 0 13.800L274.400 405.600l-92.800 10.300c-12.400 1.400-22.900-9.100-21.500-21.500l10.300-92.800L388.800 83.200c3.800-3.800 10-3.800 13.800 0zm162-22.900l-48.800-48.800c-15.200-15.200-39.900-15.200-55.200 0l-35.400 35.400c-3.800 3.800-3.800 10 0 13.800l90.200 90.200c3.800 3.800 10 3.800 13.800 0l35.400-35.400c15.200-15.300 15.200-40 0-55.200zM384 346.200V448H64V128h229.800c3.200 0 6.200-1.300 8.500-3.500l40-40c7.600-7.600 2.200-20.500-8.500-20.500H48C21.500 64 0 85.500 0 112v352c0 26.500 21.500 48 48 48h352c26.500 0 48-21.500 48-48V306.200c0-10.700-12.900-16-20.500-8.500l-40 40c-2.200 2.300-3.500 5.300-3.500 8.500z"/></svg>
<svg style="left:893px;top:636.5px;fill:#dc3545" width="11.3" height="12.9" viewBox="0 0 448 512"><path d="M432 32H312l-9.400-18.700A24 24 0 0 0 281.100 0H166.800a23.720 23.720 0 0 0-21.400 13.300L136 32H16A16 16 0 0 0 0 48v32a16 16 0 0 0 16 16h416a16 16 0 0 0 16-16V48a16 16 0 0 0-16-16zM53.200 467a48 48 0 0 0 47.900 45h245.800a48 48 0 0 0 47.900-45L416 128H32z"/></svg>
<div class="abs row" style="top:676px"></div>
<div class="abs cb" style="top:687px"></div>
<svg style="left:60px;top:680px" width="31" height="31" viewBox="0 0 31 31"><g fill="none" stroke="#000" stroke-width="1.6"><path d="M8.700 15L16 7.500C19 4.500 23.500 2.300 27.500 2.200C29.200 2.200 29.600 3 29.500 5C29.300 9 27 12.300 24 15L16.500 22.800"/><path d="M5.800 7.500H16M24 15V25.800"/><path d="M5.800 7.500L2.500 10.200L21.100 28.200L24 25.800"/><path d="M1.200 24.700L7.600 18.500M5.200 26.300L10.300 21.500M9 27.600L13 23.600" stroke-width="1.800"/></g><path d="M20.500 8.200C22 6.800 24.500 6.800 25 7.200C25.300 7.800 24 10.200 23.200 10.800C22.500 11 21 9.500 20.500 8.200z" fill="#000"/></svg>
<div class="t lnk" id="r6" style="left:98px;top:688px">LA Course Evaluation Spring 2016</div>
<svg style="left:305.5px;top:686.8px;fill:#265d7e;stroke:#265d7e" width="11" height="9.2" viewBox="0 0 11 9.2"><path d="M5.400 1.700H1.800A1 1 0 0 0 0.800 2.700V7.500A1 1 0 0 0 1.800 8.500H6.600A1 1 0 0 0 7.600 7.500V5.400" fill="none" stroke-width="1.300"/><path d="M4.300 5.700L8.800 1.400" fill="none" stroke-width="1.500"/><path d="M6.500 0.100H10.700V4.300z" stroke="none"/></svg>
<svg style="left:602px;top:684px;fill:#28a745" width="12.4" height="12.4" viewBox="0 0 512 512"><path d="M504 256c0 136.967-111.033 248-248 248S8 392.967 8 256 119.033 8 256 8s248 111.033 248 248zM227.314 387.314l184-184c6.248-6.248 6.248-16.379 0-22.627l-22.627-22.627c-6.248-6.249-16.379-6.249-22.628 0L216 308.118l-70.059-70.059c-6.248-6.248-16.379-6.248-22.628 0l-22.627 22.627c-6.248 6.248-6.248 16.379 0 22.627l104 104c6.249 6.249 16.379 6.249 22.628.001z"/></svg>
<svg style="left:673.7px;top:684px;fill:#212529" width="12.6" height="12.6" viewBox="0 0 512 512"><path d="M256 8C119.034 8 8 119.033 8 256s111.034 248 248 248 248-111.034 248-248S392.967 8 256 8zm130.108 117.892c65.448 65.448 70 165.481 20.677 235.637L150.47 105.216c70.204-49.356 170.226-44.735 235.638 20.676zM125.892 386.108c-65.448-65.448-70-165.481-20.677-235.637L361.53 406.784c-70.203 49.356-170.226 44.736-235.638-20.676z"/></svg>
<svg style="left:739px;top:684px;fill:#28a745" width="12.4" height="12.4" viewBox="0 0 512 512"><path d="M504 256c0 136.967-111.033 248-248 248S8 392.967 8 256 119.033 8 256 8s248 111.033 248 248zM227.314 387.314l184-184c6.248-6.248 6.248-16.379 0-22.627l-22.627-22.627c-6.248-6.249-16.379-6.249-22.628 0L216 308.118l-70.059-70.059c-6.248-6.248-16.379-6.248-22.628 0l-22.627 22.627c-6.248 6.248-6.248 16.379 0 22.627l104 104c6.249 6.249 16.379 6.249 22.628.001z"/></svg>
<svg style="left:869px;top:683.5px;fill:#265d7e" width="14.2" height="12.6" viewBox="0 0 576 512"><path d="M402.600 83.200l90.200 90.200c3.800 3.800 3.800 10 0 13.800L274.400 405.600l-92.800 10.300c-12.400 1.400-22.900-9.100-21.500-21.500l10.300-92.800L388.800 83.200c3.800-3.800 10-3.800 13.800 0zm162-22.900l-48.800-48.800c-15.200-15.200-39.900-15.200-55.200 0l-35.400 35.400c-3.800 3.800-3.800 10 0 13.800l90.200 90.200c3.800 3.800 10 3.800 13.800 0l35.400-35.400c15.200-15.300 15.200-40 0-55.200zM384 346.200V448H64V128h229.800c3.200 0 6.200-1.300 8.500-3.500l40-40c7.600-7.600 2.200-20.500-8.500-20.500H48C21.500 64 0 85.500 0 112v352c0 26.500 21.500 48 48 48h352c26.500 0 48-21.500 48-48V306.200c0-10.700-12.900-16-20.500-8.500l-40 40c-2.200 2.300-3.500 5.300-3.500 8.500z"/></svg>
<svg style="left:893px;top:683.5px;fill:#dc3545" width="11.3" height="12.9" viewBox="0 0 448 512"><path d="M432 32H312l-9.400-18.700A24 24 0 0 0 281.100 0H166.800a23.720 23.720 0 0 0-21.400 13.300L136 32H16A16 16 0 0 0 0 48v32a16 16 0 0 0 16 16h416a16 16 0 0 0 16-16V48a16 16 0 0 0-16-16zM53.200 467a48 48 0 0 0 47.900 45h245.800a48 48 0 0 0 47.900-45L416 128H32z"/></svg>
<div class="abs row" style="top:723px"></div>
<div class="abs cb" style="top:734px"></div>
<svg style="left:60px;top:727px" width="31" height="31" viewBox="0 0 31 31"><g fill="none" stroke="#000" stroke-width="1.6"><path d="M8.700 15L16 7.500C19 4.500 23.500 2.300 27.500 2.200C29.200 2.200 29.600 3 29.500 5C29.300 9 27 12.300 24 15L16.500 22.800"/><path d="M5.800 7.500H16M24 15V25.800"/><path d="M5.800 7.500L2.500 10.200L21.100 28.200L24 25.800"/><path d="M1.200 24.700L7.600 18.500M5.200 26.300L10.300 21.500M9 27.600L13 23.600" stroke-width="1.800"/></g><path d="M20.500 8.200C22 6.800 24.500 6.800 25 7.200C25.300 7.800 24 10.200 23.200 10.800C22.500 11 21 9.500 20.500 8.200z" fill="#000"/></svg>
<div class="t lnk" id="r7" style="left:98px;top:735px">LA Course Evaluation Spring 2016</div>
<svg style="left:305.5px;top:733.8px;fill:#265d7e;stroke:#265d7e" width="11" height="9.2" viewBox="0 0 11 9.2"><path d="M5.400 1.700H1.800A1 1 0 0 0 0.800 2.700V7.500A1 1 0 0 0 1.800 8.500H6.600A1 1 0 0 0 7.600 7.500V5.400" fill="none" stroke-width="1.300"/><path d="M4.300 5.700L8.800 1.400" fill="none" stroke-width="1.500"/><path d="M6.500 0.100H10.700V4.300z" stroke="none"/></svg>
<svg style="left:602px;top:731px;fill:#28a745" width="12.4" height="12.4" viewBox="0 0 512 512"><path d="M504 256c0 136.967-111.033 248-248 248S8 392.967 8 256 119.033 8 256 8s248 111.033 248 248zM227.314 387.314l184-184c6.248-6.248 6.248-16.379 0-22.627l-22.627-22.627c-6.248-6.249-16.379-6.249-22.628 0L216 308.118l-70.059-70.059c-6.248-6.248-16.379-6.248-22.628 0l-22.627 22.627c-6.248 6.248-6.248 16.379 0 22.627l104 104c6.249 6.249 16.379 6.249 22.628.001z"/></svg>
<svg style="left:673.7px;top:731px;fill:#212529" width="12.6" height="12.6" viewBox="0 0 512 512"><path d="M256 8C119.034 8 8 119.033 8 256s111.034 248 248 248 248-111.034 248-248S392.967 8 256 8zm130.108 117.892c65.448 65.448 70 165.481 20.677 235.637L150.47 105.216c70.204-49.356 170.226-44.735 235.638 20.676zM125.892 386.108c-65.448-65.448-70-165.481-20.677-235.637L361.53 406.784c-70.203 49.356-170.226 44.736-235.638-20.676z"/></svg>
<svg style="left:739px;top:731px;fill:#28a745" width="12.4" height="12.4" viewBox="0 0 512 512"><path d="M504 256c0 136.967-111.033 248-248 248S8 392.967 8 256 119.033 8 256 8s248 111.033 248 248zM227.314 387.314l184-184c6.248-6.248 6.248-16.379 0-22.627l-22.627-22.627c-6.248-6.249-16.379-6.249-22.628 0L216 308.118l-70.059-70.059c-6.248-6.248-16.379-6.248-22.628 0l-22.627 22.627c-6.248 6.248-6.248 16.379 0 22.627l104 104c6.249 6.249 16.379 6.249 22.628.001z"/></svg>
<svg style="left:869px;top:730.5px;fill:#265d7e" width="14.2" height="12.6" viewBox="0 0 576 512"><path d="M402.600 83.200l90.200 90.200c3.800 3.800 3.800 10 0 13.800L274.400 405.600l-92.800 10.300c-12.400 1.400-22.900-9.100-21.500-21.500l10.300-92.800L388.800 83.200c3.800-3.800 10-3.800 13.800 0zm162-22.900l-48.800-48.800c-15.200-15.200-39.900-15.200-55.200 0l-35.400 35.400c-3.800 3.800-3.800 10 0 13.800l90.200 90.200c3.800 3.800 10 3.800 13.800 0l35.400-35.400c15.200-15.300 15.200-40 0-55.200zM384 346.200V448H64V128h229.800c3.200 0 6.200-1.300 8.500-3.500l40-40c7.600-7.600 2.200-20.500-8.500-20.500H48C21.500 64 0 85.500 0 112v352c0 26.500 21.500 48 48 48h352c26.500 0 48-21.500 48-48V306.200c0-10.700-12.900-16-20.500-8.500l-40 40c-2.200 2.300-3.500 5.300-3.500 8.500z"/></svg>
<svg style="left:893px;top:730.5px;fill:#dc3545" width="11.3" height="12.9" viewBox="0 0 448 512"><path d="M432 32H312l-9.400-18.700A24 24 0 0 0 281.100 0H166.800a23.720 23.720 0 0 0-21.400 13.300L136 32H16A16 16 0 0 0 0 48v32a16 16 0 0 0 16 16h416a16 16 0 0 0 16-16V48a16 16 0 0 0-16-16zM53.200 467a48 48 0 0 0 47.900 45h245.800a48 48 0 0 0 47.900-45L416 128H32z"/></svg>
<div class="abs row" style="top:770px"></div>
<!--/TABLE-->
</body>
</html>
